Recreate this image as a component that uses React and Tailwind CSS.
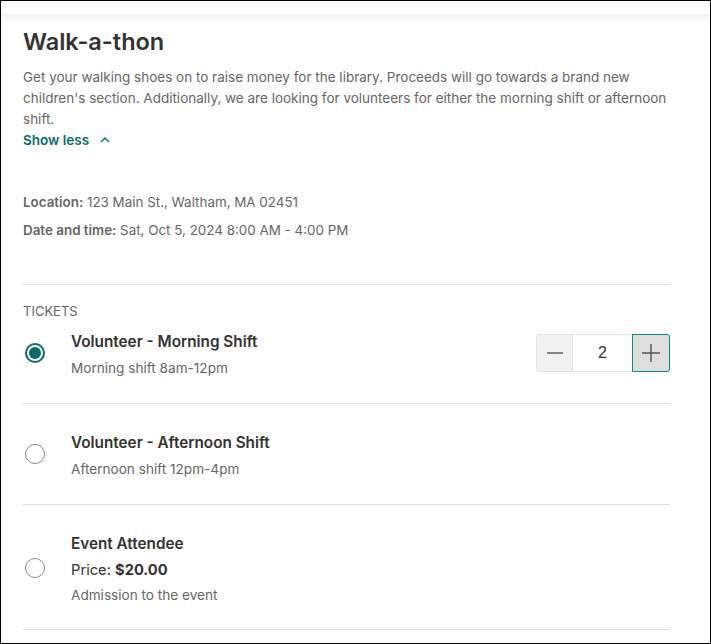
import React, { useState } from "react";

const tickets = [
  {
    id: "morning",
    title: "Volunteer - Morning Shift",
    detail: "Morning shift 8am-12pm",
  },
  {
    id: "afternoon",
    title: "Volunteer - Afternoon Shift",
    detail: "Afternoon shift 12pm-4pm",
  },
  {
    id: "attendee",
    title: "Event Attendee",
    price: "$20.00",
    detail: "Admission to the event",
  },
];

function Radio({ checked }) {
  return (
    <span
      className={
        checked
          ? "w-[20px] h-[20px] rounded-full border-2 border-[#0b6b6b] flex items-center justify-center"
          : "w-[20px] h-[20px] rounded-full border border-[#8a8a8a] flex items-center justify-center"
      }
    >
      {checked && <span className="w-[12px] h-[12px] rounded-full bg-[#0b6b6b]" />}
    </span>
  );
}

function Stepper({ value, onChange }) {
  return (
    <div className="mb-[3px] flex h-[38px] w-[134px] rounded-[3px] border border-[#e2e2e2] bg-white">
      <button
        onClick={() => onChange(Math.max(0, value - 1))}
        className="w-[36px] bg-[#f1f1f1] border-r border-[#e2e2e2] rounded-l-[3px] flex items-center justify-center"
      >
        <svg width="18" height="18" viewBox="0 0 18 18">
          <path d="M1 9h16" stroke="#555" strokeWidth="1.4" />
        </svg>
      </button>
      <div className="flex-1 flex items-center justify-center text-[16px] text-[#333] font-['Liberation_Sans',sans-serif]">
        {value}
      </div>
      <button
        onClick={() => onChange(value + 1)}
        className="w-[38px] -my-px -mr-px bg-[#dedede] border border-[#0e8a86] rounded-r-[3px] flex items-center justify-center"
      >
        <svg width="20" height="20" viewBox="0 0 20 20">
          <path d="M1 10h18M10 1v18" stroke="#555" strokeWidth="1.4" />
        </svg>
      </button>
    </div>
  );
}

export default function App() {
  const [selected, setSelected] = useState("morning");
  const [qty, setQty] = useState(2);

  return (
    <div className="w-[711px] h-[644px] border border-black bg-white overflow-hidden font-['Inter',sans-serif]">
      <div className="h-[13px] bg-white" />
      <div className="h-[8px] bg-gradient-to-b from-[#f1f1f1] to-white" />
      <div className="pl-[22px] pr-[40px]">
        <h1 className="mt-[5px] text-[23.5px] leading-[30px] font-semibold text-[#333]">Walk-a-thon</h1>
        <p className="mt-[10px] text-[13.5px] leading-[21px] text-[#666]">
          Get your walking shoes on to raise money for the library. Proceeds will go towards a brand new
          children's section. Additionally, we are looking for volunteers for either the morning shift or afternoon
          shift.
        </p>
        <button className="flex items-center gap-[11px] text-[13.5px] leading-[20px] font-semibold text-[#0b6b6b]">
          Show less
          <svg width="10" height="10" viewBox="0 0 10 10">
            <path d="M1 7l4-4 4 4" fill="none" stroke="#0b6b6b" strokeWidth="1.4" />
          </svg>
        </button>

        <div className="mt-[42px] flex flex-col gap-[8px] text-[13.4px] leading-[20px] text-[#666]">
          <div>
            <span className="font-semibold">Location:</span> 123 Main St., Waltham, MA 02451
          </div>
          <div>
            <span className="font-semibold">Date and time:</span> Sat, Oct 5, 2024 8:00 AM - 4:00 PM
          </div>
        </div>

        <div className="mt-[44px] border-t border-[#e0e0e0]" />

        <div className="mt-[16px] text-[13px] leading-[20px] text-[#666] uppercase">Tickets</div>

        {tickets.map((t, i) => (
          <div
            key={t.id}
            onClick={() => setSelected(t.id)}
            className={
              i === 0
                ? "pt-[10px] pb-[25px] border-b border-[#e0e0e0] flex items-center cursor-pointer"
                : i === 1
                ? "pt-[28px] pb-[25px] border-b border-[#e0e0e0] flex items-center cursor-pointer"
                : "pt-[28px] pb-[24px] border-b border-[#e0e0e0] flex items-center cursor-pointer"
            }
          >
            <div className="w-[48px] pl-[2px] mb-[3px] flex items-center">
              <Radio checked={selected === t.id} />
            </div>
            <div className="flex-1 flex flex-col gap-[5px]">
              <div className="text-[15.3px] leading-[22px] font-semibold text-[#333]">{t.title}</div>
              {t.price && (
                <div className="text-[14.7px] leading-[20px] text-[#333]">
                  Price: <span className="font-bold">{t.price}</span>
                </div>
              )}
              <div className="text-[13.6px] leading-[20px] text-[#666]">{t.detail}</div>
            </div>
            {selected === t.id && t.id === "morning" && (
              <Stepper value={qty} onChange={setQty} />
            )}
          </div>
        ))}
      </div>
    </div>
  );
}
